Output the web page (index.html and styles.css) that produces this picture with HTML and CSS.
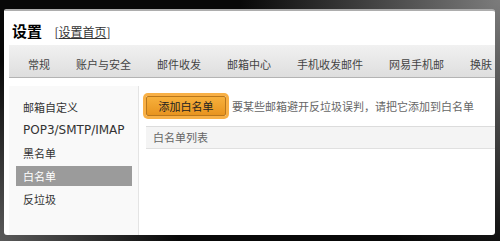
FILE: index.html
```html
<!DOCTYPE html>
<html lang="zh-CN">
<head>
    <meta charset="UTF-8">
    <title>设置</title>
    <link rel="stylesheet" href="styles.css">
</head>
<body>
    <div class="panel">
        <div class="header">
            <span class="title">设置</span>
            <span class="home">[<a href="#">设置首页</a>]</span>
        </div>

        <div class="tabs">
            <span class="tab">常规</span>
            <span class="tab">账户与安全</span>
            <span class="tab">邮件收发</span>
            <span class="tab">邮箱中心</span>
            <span class="tab">手机收发邮件</span>
            <span class="tab">网易手机邮</span>
            <span class="tab">换肤</span>
        </div>

        <div class="content">
            <div class="sidebar">
                <div class="side-item">邮箱自定义</div>
                <div class="side-item latin">POP3/SMTP/IMAP</div>
                <div class="side-item">黑名单</div>
                <div class="side-item active">白名单</div>
                <div class="side-item">反垃圾</div>
            </div>

            <div class="main">
                <div class="toolbar">
                    <button class="add-btn">添加白名单</button>
                    <span class="hint">要某些邮箱避开反垃圾误判，请把它添加到白名单</span>
                </div>
                <div class="list-head">白名单列表</div>
            </div>
        </div>
    </div>
</body>
</html>
```

FILE: styles.css
```css
* {
    margin: 0;
    padding: 0;
    box-sizing: border-box;
}

html, body {
    height: 100%;
}

body {
    font-family: "Noto Sans CJK SC", "Noto Sans", sans-serif;
    font-size: 11px;
    color: #333;
    padding: 9px 5px 6px 4px;
    background:
        radial-gradient(circle at 100% 0%, #7c7c7c, rgba(0, 0, 0, 0) 260px),
        radial-gradient(circle at 0% 100%, #5a5a5a, rgba(0, 0, 0, 0) 180px),
        #080808;
    overflow: hidden;
}

.panel {
    height: 226px;
    background: #fff;
    border-top: 2px solid #adadad;
    border-radius: 2px 3px 3px 3px;
    display: flex;
    flex-direction: column;
    overflow: hidden;
}

.header {
    padding: 12px 0 6px 8px;
    line-height: 16px;
    height: 34px;
}

.title {
    font-size: 15px;
    font-weight: 700;
    color: #000;
}

.home {
    font-size: 12px;
    color: #333;
    margin-left: 10px;
}

.home a {
    color: #333;
    text-decoration: underline;
}

.tabs {
    display: flex;
    margin-left: 5px;
    height: 33px;
    padding: 7px 0 0 6px;
    line-height: 24px;
    white-space: nowrap;
    background: linear-gradient(#f1f1f1, #dedede);
    border-bottom: 1px solid #b4b4b4;
    color: #444;
}

.tab {
    flex: none;
    padding: 0 13px;
}

.content {
    flex: 1;
    display: flex;
    margin: 8px 0 0 5px;
}

.sidebar {
    width: 130px;
    padding: 11px 6px 0 7px;
    background: #f9f9f9;
    border-right: 1px solid #e4e4e4;
}

.side-item {
    height: 20px;
    line-height: 20px;
    padding-left: 7px;
    margin-bottom: 3px;
    color: #333;
}

.side-item.latin {
    font-family: "DejaVu Sans", sans-serif;
    font-size: 12px;
}

.side-item.active {
    background: #9b9b9b;
    color: #fff;
}

.main {
    flex: 1;
    padding: 10px 0 0 7px;
}

.toolbar {
    display: flex;
    align-items: center;
}

.add-btn {
    width: 80px;
    height: 20px;
    font-family: inherit;
    font-size: 11px;
    color: #222;
    border: 1px solid #b9771c;
    border-radius: 2px;
    background: linear-gradient(#f7b03c, #e8941f);
    box-shadow: 0 0 0 3px #f8b046;
}

.hint {
    margin-left: 6px;
    color: #666;
}

.list-head {
    margin-top: 10px;
    height: 23px;
    line-height: 21px;
    padding-left: 7px;
    color: #666;
    background: #f4f4f4;
    border-top: 1px solid #dcdcdc;
    border-bottom: 1px solid #e0e0e0;
}
```
